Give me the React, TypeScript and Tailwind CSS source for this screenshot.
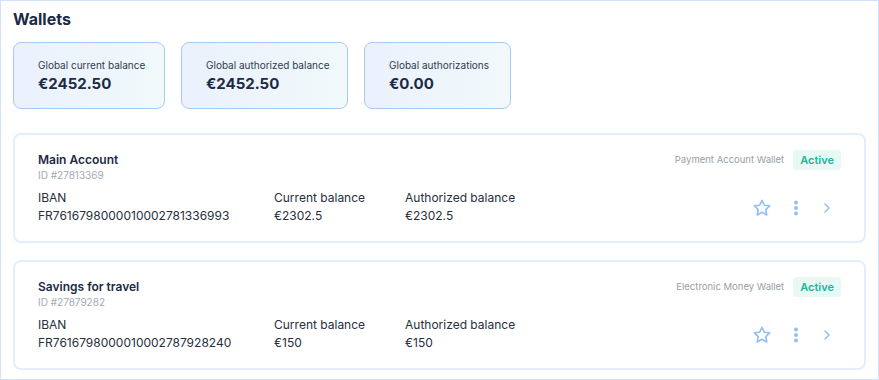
import React from 'react';

interface Summary {
  label: string;
  value: string;
  width: string;
}

interface Wallet {
  name: string;
  id: string;
  iban: string;
  current: string;
  authorized: string;
  type: string;
}

const summaries: Summary[] = [
  { label: 'Global current balance', value: '€2452.50', width: 'w-[152px]' },
  { label: 'Global authorized balance', value: '€2452.50', width: 'w-[167px]' },
  { label: 'Global authorizations', value: '€0.00', width: 'w-[147px]' },
];

const wallets: Wallet[] = [
  {
    name: 'Main Account',
    id: 'ID #27813369',
    iban: 'FR7616798000010002781336993',
    current: '€2302.5',
    authorized: '€2302.5',
    type: 'Payment Account Wallet',
  },
  {
    name: 'Savings for travel',
    id: 'ID #27879282',
    iban: 'FR7616798000010002787928240',
    current: '€150',
    authorized: '€150',
    type: 'Electronic Money Wallet',
  },
];

const StarIcon = () => (
  <svg width="20" height="20" viewBox="0 0 24 24" fill="none" stroke="#93bff3" strokeWidth="2" strokeLinejoin="round">
    <path d="M12 2.8l2.8 5.9 6.4.8-4.7 4.4 1.2 6.4L12 17.2l-5.7 3.1 1.2-6.4-4.7-4.4 6.4-.8z" />
  </svg>
);

const DotsIcon = () => (
  <svg width="6" height="16" viewBox="0 0 6 16" fill="#93bff3">
    <circle cx="3" cy="2.5" r="2" />
    <circle cx="3" cy="8" r="2" />
    <circle cx="3" cy="13.5" r="2" />
  </svg>
);

const ChevronIcon = () => (
  <svg width="8" height="12" viewBox="0 0 8 12" fill="none" stroke="#93bff3" strokeWidth="1.5" strokeLinecap="round" strokeLinejoin="round">
    <path d="M2 2l4 4-4 4" />
  </svg>
);

const App: React.FC = () => {
  return (
    <div className="w-[879px] h-[380px] bg-white border border-[#d3e2fa] px-3 font-['Inter',sans-serif] text-[#1e293b] overflow-hidden">
      <h1 className="text-[16px] font-bold leading-5 pt-[8px] text-[#1c2a44]">Wallets</h1>

      <div className="flex gap-[16px] mt-[13px]">
        {summaries.map((s) => (
          <div
            key={s.label}
            className={`${s.width} h-[67px] rounded-[8px] border border-[#a8c9f4] bg-gradient-to-r from-[#eaf1fd] to-[#f1f9fa] pl-[24px] pt-[14px]`}
          >
            <div className="text-[10px] leading-4 text-[#2f3a4d]">{s.label}</div>
            <div className="text-[15px] leading-5 font-bold mt-[1px] text-[#1c2a44]">{s.value}</div>
          </div>
        ))}
      </div>

      <div className="flex flex-col gap-[17px] mt-[24px]">
        {wallets.map((w) => (
          <div key={w.id} className="h-[110px] rounded-[8px] border-2 border-[#e4edfb] flex pl-[23px] pr-[23px] pt-[17px]">
            <div className="flex-1">
              <div className="text-[12px] leading-4 font-semibold text-[#1c2a44]">{w.name}</div>
              <div className="text-[10px] leading-3 text-[#a3a9b3] mt-[1px]">{w.id}</div>
              <div className="flex text-[12px] leading-[18px] text-[#262f3d] mt-[8px]">
                <div className="w-[236px]">
                  <div>IBAN</div>
                  <div>{w.iban}</div>
                </div>
                <div className="w-[131px]">
                  <div>Current balance</div>
                  <div>{w.current}</div>
                </div>
                <div>
                  <div>Authorized balance</div>
                  <div>{w.authorized}</div>
                </div>
              </div>
            </div>
            <div className="flex flex-col items-end">
              <div className="flex items-center gap-[9px] -mt-[2px]">
                <span className="text-[9.5px] text-[#989ea8]">{w.type}</span>
                <span className="text-[11px] font-semibold text-[#16b79b] bg-[#e8f8f5] rounded-[4px] px-[7px] py-[2px] leading-[16px]">Active</span>
              </div>
              <div className="flex items-center mt-[28px] mr-[10px]">
                <StarIcon />
                <div className="ml-[21px]"><DotsIcon /></div>
                <div className="ml-[24px]"><ChevronIcon /></div>
              </div>
            </div>
          </div>
        ))}
      </div>
    </div>
  );
};

export default App;
